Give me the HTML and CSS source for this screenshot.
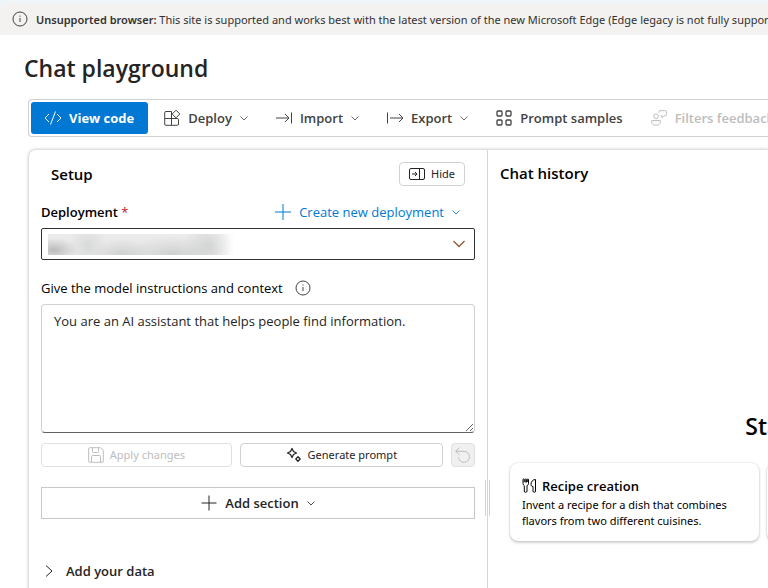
FILE: index.html
```html
<!DOCTYPE html>
<html lang="en">
<head>
<meta charset="utf-8">
<meta name="viewport" content="width=device-width, initial-scale=1">
<title>Chat playground</title>
<link rel="stylesheet" href="styles.css">
</head>
<body>
<div class="banner" role="status">
  <svg class="icon thin" viewBox="0 0 16 16"><circle cx="8" cy="8" r="7"/><path d="M8 7v4"/><path d="M8 4.6v1.1"/></svg>
  <p class="banner-text"><strong>Unsupported browser:</strong> This site is supported and works best with the latest version of the new Microsoft Edge (Edge legacy is not fully supported).</p>
</div>

<main class="page">
  <h1 class="title">Chat playground</h1>

  <div class="toolbar" role="toolbar" aria-label="Playground actions">
    <button class="tool tool-primary" type="button">
      <svg class="icon" viewBox="0 0 16 16"><path d="M4 4 0 8l4 4M12 4l4 4-4 4M10.500 1.500l-5 13"/></svg>
      View code
    </button>
    <button class="tool" type="button">
      <svg class="icon" viewBox="0 0 16 16"><path d="M7.500 1.500H2a1.300 1.300 0 0 0-1.300 1.300V14A1.300 1.300 0 0 0 2 15.300h11.200a1.300 1.300 0 0 0 1.300-1.300V9.800a1.300 1.300 0 0 0-1.300-1.300H.7M7.500 1.500v13.800"/><path d="m12 .2 3.800 3.800L12 7.800 8.200 4z"/></svg>
      Deploy
      <svg class="chevron" viewBox="0 0 8 8"><path d="m.5 2.500 3.500 3.500 3.500-3.500"/></svg>
    </button>
    <button class="tool" type="button">
      <svg class="icon" viewBox="0 0 16 16"><path d="M0 8h13M9 4l4 4-4 4M15.500 2.500v11"/></svg>
      Import
      <svg class="chevron" viewBox="0 0 8 8"><path d="m.5 2.500 3.500 3.500 3.500-3.500"/></svg>
    </button>
    <button class="tool" type="button">
      <svg class="icon" viewBox="0 0 16 16"><path d="M.5 2.500v11M3 8h13M12 4l4 4-4 4"/></svg>
      Export
      <svg class="chevron" viewBox="0 0 8 8"><path d="m.5 2.500 3.500 3.500 3.500-3.500"/></svg>
    </button>
    <button class="tool" type="button">
      <svg class="icon bold" viewBox="0 0 16 16"><rect x="1" y="1" width="5" height="5" rx="1"/><rect x="10" y="1" width="5" height="5" rx="1"/><rect x="1" y="10" width="5" height="5" rx="1"/><rect x="10" y="10" width="5" height="5" rx="1"/></svg>
      Prompt samples
    </button>
    <button class="tool" type="button" disabled>
      <svg class="icon" viewBox="0 0 16 16"><circle cx="5" cy="6.200" r="2.300"/><path d="M.6 10.600h8.800v1.200c0 4.600-8.800 4.600-8.800 0z"/><path d="M9 .7h5.500a1 1 0 0 1 1 1v3a1 1 0 0 1-1 1H13l-2 2v-2H9.500"/><path d="M9 .7a1 1 0 0 0-1 1v1"/></svg>
      Filters feedback
    </button>
  </div>

  <div class="workspace">
    <section class="setup" aria-labelledby="setup-heading">
      <header class="setup-head">
        <h2 class="heading" id="setup-heading">Setup</h2>
        <button class="small-button" type="button">
          <svg class="icon" viewBox="0 0 16 16"><rect x=".5" y="2.500" width="15" height="11" rx="1.500"/><path d="M10.500 2.500v11M3 8h5M6 6l2 2-2 2"/></svg>
          Hide
        </button>
      </header>

      <div class="label-row">
        <label class="label-strong" for="deployment">Deployment <span class="required">*</span></label>
        <button class="link-button" type="button">
          <svg class="icon" viewBox="0 0 16 16"><path d="M8 0v16M0 8h16"/></svg>
          Create new deployment
          <svg class="chevron" viewBox="0 0 8 8"><path d="m.5 2.500 3.500 3.500 3.500-3.500"/></svg>
        </button>
      </div>
      <div class="select-wrap">
        <select class="select" id="deployment"><option></option></select>
        <span class="redacted"></span>
        <svg class="select-arrow" viewBox="0 0 14 8"><path d="m1.500 1 5.500 5.500L12.500 1"/></svg>
      </div>

      <div class="instructions-label">
        <label for="instructions">Give the model instructions and context</label>
        <svg class="icon thin" viewBox="0 0 16 16"><circle cx="8" cy="8" r="7"/><path d="M8 7v4"/><path d="M8 4.600v1.100"/></svg>
      </div>
      <textarea class="instructions" id="instructions">You are an AI assistant that helps people find information.</textarea>

      <div class="actions">
        <button class="small-button apply" type="button" disabled>
          <svg class="icon" viewBox="0 0 16 16"><path d="M2 .7h10.500l2.800 2.800V14a1.300 1.300 0 0 1-1.300 1.300H2A1.300 1.300 0 0 1 .7 14V2A1.300 1.300 0 0 1 2 .7zM4.500.7v3.800a1 1 0 0 0 1 1h4a1 1 0 0 0 1-1V.7M3.500 15V9.500a1 1 0 0 1 1-1h7a1 1 0 0 1 1 1V15"/></svg>
          Apply changes
        </button>
        <button class="small-button generate" type="button">
          <svg class="icon bold" viewBox="0 0 16 16"><path d="M6 1.500 7.500 4.500 10.500 6 7.500 7.500 6 10.500 4.500 7.500 1.500 6 4.500 4.500z" stroke-linejoin="round"/><path d="m12 9.800 2.200 2.200-2.200 2.200L9.800 12z" stroke-linejoin="round"/></svg>
          Generate prompt
        </button>
        <button class="small-button undo" type="button" aria-label="Undo" disabled>
          <svg class="icon" viewBox="0 0 16 16"><path d="M4.500.5.700 4.300 4.500 8M.7 4.300H9a5.500 5.500 0 1 1-5.500 6.200"/></svg>
        </button>
      </div>

      <button class="add-section" type="button">
        <svg class="icon" viewBox="0 0 16 16"><path d="M8 .5v15M.5 8h15"/></svg>
        Add section
        <svg class="chevron" viewBox="0 0 8 8"><path d="m.5 2.500 3.500 3.500 3.500-3.500"/></svg>
      </button>

      <button class="disclosure" type="button" aria-expanded="false">
        <svg class="icon" viewBox="0 0 16 16"><path d="m5 2.500 6 5.500-6 5.500"/></svg>
        Add your data
      </button>
      <span class="sash"></span>
    </section>

    <section class="chat" aria-labelledby="chat-heading">
      <h2 class="heading" id="chat-heading">Chat history</h2>
      <div class="starter">
        <h3 class="starter-title">Start chatting</h3>
        <div class="cards">
          <a class="card" href="#recipe">
            <span class="card-title">
              <svg class="icon" viewBox="0 0 16 16"><path d="M1 1.500v4c0 1 .5 1.700 1.300 2.200V13a1.300 1.300 0 0 0 2.700 0V7.700C6 7.200 6.500 6.500 6.500 5.500v-4a.6.6 0 0 0-1.200 0V4M1 1.500a.6.6 0 0 1 1.200 0V4M3.200 4.500v-3a.6.6 0 0 1 1.200 0v3M13.500 1.500c-3 0-4.500 2.500-4.500 5 0 1.200.5 2 2 2V13a1.200 1.200 0 0 0 2.500 0z"/></svg>
              Recipe creation
            </span>
            <span class="card-text">Invent a recipe for a dish that combines flavors from two different cuisines.</span>
          </a>
          <a class="card" href="#more" aria-label="More samples"></a>
        </div>
      </div>
    </section>
  </div>
</main>
</body>
</html>
```
FILE: styles.css
```css
*,
*::before,
*::after {
  box-sizing: border-box;
}

body {
  margin: 0;
  padding-top: 3px;
  min-height: 100vh;
  display: flex;
  flex-direction: column;
  overflow: hidden;
  background: #eff4f9;
  color: #242424;
  font: 13px/20px "Open Sans", "Noto Sans", sans-serif;
}

h1, h2, h3, p {
  margin: 0;
}

button, select, textarea {
  margin: 0;
  color: inherit;
  font: inherit;
}

button {
  display: flex;
  flex: none;
  align-items: center;
  justify-content: center;
  background: none;
  border: 0;
  padding: 0;
  white-space: nowrap;
}

svg {
  display: block;
  flex: none;
  fill: none;
  stroke: currentColor;
  stroke-width: 1;
  overflow: visible;
}

.icon { width: 16px; height: 16px; }
.bold { stroke-width: 1.3; }
.thin { color: #424242; }

.chevron {
  width: 8px;
  height: 8px;
  opacity: 0.8;
}

.banner {
  display: flex;
  align-items: center;
  gap: 8px;
  height: 32px;
  padding-left: 12px;
  overflow: hidden;
  background: #f3f2f1;
  border-top-left-radius: 8px;
  color: #323130;
}

.banner-text {
  padding-top: 2px;
  font-family: "Noto Sans", sans-serif;
  font-size: 11px;
  line-height: 16px;
  white-space: nowrap;
}

.banner-text strong { font-weight: 600; }

.page {
  flex: 1;
  display: flex;
  flex-direction: column;
  padding: 16px 0 0 28px;
  overflow: hidden;
  background: #fff;
}

.title {
  margin: 0 0 14px -4px;
  font-size: 23px;
  line-height: 34px;
  font-weight: 600;
}

.toolbar {
  display: flex;
  gap: 4px;
  height: 38px;
  padding: 2px;
  border: 1px solid #d1d1d1;
  border-right: 0;
  border-radius: 4px 0 0 4px;
  overflow: hidden;
}

.tool {
  gap: 8px;
  padding: 0 12px;
  border-radius: 3px;
  color: #424242;
  font-weight: 600;
}

.tool:disabled { color: #bdbdbd; }

.tool-primary {
  padding: 0 14px;
  background: #0078d4;
  color: #fff;
  font-weight: 700;
}

.workspace {
  flex: 1;
  display: flex;
  margin-top: 12px;
  border: 1px solid #e0e0e0;
  border-width: 1px 0 0 1px;
  border-top-left-radius: 8px;
  box-shadow: 0 0 3px rgba(0, 0, 0, 0.2);
}

.setup {
  position: relative;
  flex: 0 0 63%;
  max-width: 459px;
  padding: 12px;
  border-right: 1px solid #d6d6d6;
}

.heading {
  font-size: 15px;
  line-height: 22px;
  font-weight: 600;
  color: #000;
}

.setup-head {
  display: flex;
  align-items: center;
  justify-content: space-between;
  height: 24px;
  padding: 0 10px;
}

.small-button {
  gap: 6px;
  height: 24px;
  padding: 0 9px;
  border: 1px solid #d1d1d1;
  border-radius: 4px;
  font-family: "Noto Sans", sans-serif;
  font-size: 11px;
}

.small-button:disabled {
  border-color: #e0e0e0;
  color: #bdbdbd;
}

.label-row {
  display: flex;
  align-items: center;
  justify-content: space-between;
  margin: 16px 0 6px;
  padding-right: 15px;
  color: #000;
}

.label-strong { font-weight: 600; }

.required {
  color: #c50f1f;
  font-weight: 400;
}

.link-button {
  gap: 8px;
  color: #0078d4;
}

.select-wrap { position: relative; }

.select {
  display: block;
  width: 100%;
  height: 32px;
  padding: 0 32px 0 8px;
  appearance: none;
  background: #fff;
  border: 1px solid #333;
  border-radius: 2px;
}

.redacted {
  position: absolute;
  top: 6px;
  left: 7px;
  width: 185px;
  height: 21px;
  pointer-events: none;
  background:
    radial-gradient(24px 12px at 6px 16px, #bcbcbc, transparent),
    radial-gradient(20px 20px at 40px 12px, #d8d9d9, transparent),
    radial-gradient(32px 16px at 74px 20px, #d0d1d1, transparent),
    radial-gradient(48px 18px at 124px 20px, #cfd1d0, transparent),
    radial-gradient(24px 24px at 160px 12px, #d3d5d4, transparent),
    linear-gradient(90deg, #ebebeb 85%, #fdfdfd);
}

.select-arrow {
  position: absolute;
  top: 12px;
  right: 9px;
  width: 14px;
  height: 8px;
  color: #8a5a34;
  stroke-width: 1.3;
  pointer-events: none;
}

.instructions-label {
  display: flex;
  align-items: center;
  gap: 12px;
  margin: 18px 0 6px;
  color: #000;
}

.instructions {
  display: block;
  width: 100%;
  height: 129px;
  padding: 6px 12px;
  background: #fff;
  border: 1px solid #d1d1d1;
  border-bottom-color: #616161;
  border-radius: 4px;
  resize: vertical;
}

.actions {
  display: flex;
  gap: 8px;
  margin: 10px 0 20px;
}

.apply { flex: 190 0 0; }
.generate { flex: 204 0 0; }

.small-button.undo {
  width: 24px;
  padding: 0;
  background: #f0f0f0;
}

.add-section {
  width: 100%;
  height: 32px;
  gap: 8px;
  border: 1px solid #c8c8c8;
  font-weight: 600;
}

.disclosure {
  gap: 9px;
  margin-top: 42px;
  font-weight: 600;
}

.sash {
  position: absolute;
  top: 330px;
  right: -3px;
  width: 5px;
  height: 36px;
  border: solid #d1d1d1;
  border-width: 0 1px;
}

.chat {
  flex: 1;
  min-width: 0;
  padding: 12px 0 0 12px;
}

.starter {
  display: flex;
  flex-direction: column;
  width: 632px;
  padding-left: 10px;
  margin-top: 226px;
}

.starter-title {
  align-self: center;
  color: #000;
  font-size: 23px;
  line-height: 32px;
  font-weight: 600;
}

.cards {
  display: flex;
  gap: 8px;
  margin-top: 21px;
}

.card {
  flex: none;
  width: 249px;
  padding: 12px;
  background: #fff;
  border-radius: 8px;
  box-shadow: 0 0 2px rgba(0, 0, 0, 0.2), 0 2px 3px rgba(0, 0, 0, 0.16);
  color: #000;
  text-decoration: none;
}

.card-title {
  display: flex;
  align-items: center;
  gap: 4px;
  font-weight: 600;
  line-height: 22px;
}

.card-text {
  display: block;
  font-family: "Noto Sans", sans-serif;
  font-size: 11px;
  line-height: 16px;
}
```
